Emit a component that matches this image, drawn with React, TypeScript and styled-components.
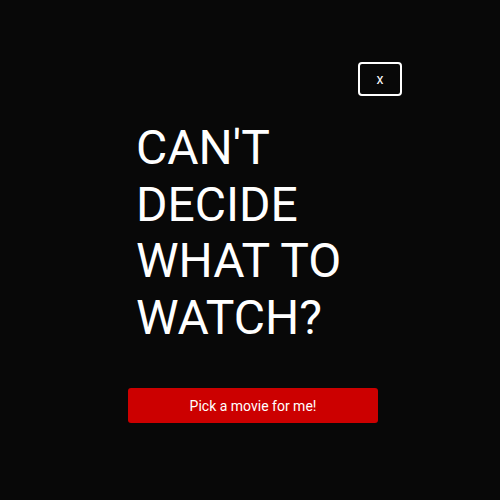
import React from "react";
import styled, { createGlobalStyle } from "styled-components";

const Global = createGlobalStyle`
  html, body { margin: 0; padding: 0; background: #080808; }
  body { font-family: Roboto, "Liberation Sans", sans-serif; }
`;

const Page = styled.div`
  min-height: 500px;
  background: #080808;
  display: flex;
  flex-direction: column;
  align-items: flex-start;
  padding: 62px 0 0 128px;
  box-sizing: border-box;
`;

const Panel = styled.div`
  width: 274px;
  display: flex;
  flex-direction: column;
`;

const CloseButton = styled.button`
  align-self: flex-end;
  width: 44px;
  height: 34px;
  border: 2px solid #ffffff;
  border-radius: 4px;
  background: transparent;
  color: #ffffff;
  font-family: Roboto, "Liberation Sans", sans-serif;
  font-size: 14px;
  padding: 0;
  cursor: pointer;
`;

const Heading = styled.h1`
  margin: 24px 0 0 8px;
  color: #ffffff;
  font-family: Roboto, "Liberation Sans", sans-serif;
  font-weight: 400;
  font-size: 48px;
  line-height: 56.5px;
  text-transform: uppercase;
`;

const PickButton = styled.button`
  margin-top: 42px;
  width: 250px;
  height: 35px;
  border: none;
  border-radius: 3px;
  background: #cc0000;
  color: #ffffff;
  font-family: Roboto, "Liberation Sans", sans-serif;
  font-size: 14px;
  cursor: pointer;
`;

export default function App() {
  return (
    <>
      <Global />
      <Page>
        <Panel>
          <CloseButton>x</CloseButton>
          <Heading>
            CAN'T
            <br />
            DECIDE
            <br />
            WHAT TO
            <br />
            WATCH?
          </Heading>
          <PickButton>Pick a movie for me!</PickButton>
        </Panel>
      </Page>
    </>
  );
}
